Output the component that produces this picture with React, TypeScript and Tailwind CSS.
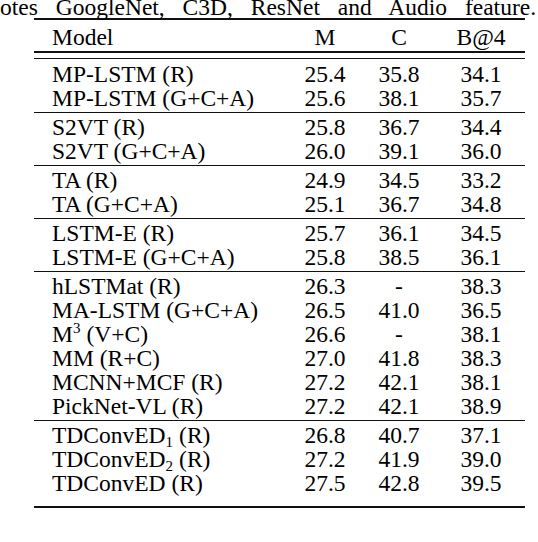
import React from "react";

type Row = { name: React.ReactNode; m: string; c: string; b: string };

const groups: Row[][] = [
  [
    { name: "MP-LSTM (R)", m: "25.4", c: "35.8", b: "34.1" },
    { name: "MP-LSTM (G+C+A)", m: "25.6", c: "38.1", b: "35.7" },
  ],
  [
    { name: "S2VT (R)", m: "25.8", c: "36.7", b: "34.4" },
    { name: "S2VT (G+C+A)", m: "26.0", c: "39.1", b: "36.0" },
  ],
  [
    { name: "TA (R)", m: "24.9", c: "34.5", b: "33.2" },
    { name: "TA (G+C+A)", m: "25.1", c: "36.7", b: "34.8" },
  ],
  [
    { name: "LSTM-E (R)", m: "25.7", c: "36.1", b: "34.5" },
    { name: "LSTM-E (G+C+A)", m: "25.8", c: "38.5", b: "36.1" },
  ],
  [
    { name: "hLSTMat (R)", m: "26.3", c: "-", b: "38.3" },
    { name: "MA-LSTM (G+C+A)", m: "26.5", c: "41.0", b: "36.5" },
    {
      name: (
        <>
          M<sup className="text-[15px] -top-[9px]">3</sup>
          <span className="ml-[6px]">(V+C)</span>
        </>
      ),
      m: "26.6",
      c: "-",
      b: "38.1",
    },
    { name: "MM (R+C)", m: "27.0", c: "41.8", b: "38.3" },
    { name: "MCNN+MCF (R)", m: "27.2", c: "42.1", b: "38.1" },
    { name: "PickNet-VL (R)", m: "27.2", c: "42.1", b: "38.9" },
  ],
  [
    {
      name: (
        <>
          TDConvED<sub className="text-[15px]">1</sub>
          <span className="ml-[6px]">(R)</span>
        </>
      ),
      m: "26.8",
      c: "40.7",
      b: "37.1",
    },
    {
      name: (
        <>
          TDConvED<sub className="text-[15px]">2</sub>
          <span className="ml-[6px]">(R)</span>
        </>
      ),
      m: "27.2",
      c: "41.9",
      b: "39.0",
    },
    { name: "TDConvED (R)", m: "27.5", c: "42.8", b: "39.5" },
  ],
];

function TRow({ r }: { r: Row }) {
  return (
    <div className="grid grid-cols-[250px_82px_66px_1fr] h-[24px] items-center leading-[24px]">
      <div className="pl-[18px] whitespace-nowrap">{r.name}</div>
      <div className="text-center">{r.m}</div>
      <div className="text-center">{r.c}</div>
      <div className="text-center pl-[5px]">{r.b}</div>
    </div>
  );
}

export default function App() {
  return (
    <div
      className="w-[538px] h-[542px] bg-white text-black overflow-hidden text-[23.5px]"
      style={{ fontFamily: '"Liberation Serif", "Times New Roman", serif' }}
    >
      <div className="h-[20px] leading-[20px] whitespace-nowrap -mt-[3px] [word-spacing:12px]">
        otes GoogleNet, C3D, ResNet and Audio feature.
      </div>
      <div className="ml-[34px] w-[491px] mt-[1px]">
        <div className="h-[2px] bg-[#111]" />
        <div className="pt-[5px]">
          <TRow r={{ name: "Model", m: "M", c: "C", b: "B@4" }} />
        </div>
        <div className="h-[2px] bg-[#111] mt-[2px]" />
        <div className="h-[1px] bg-[#111] mt-[5px]" />
        <div className="pt-[3px]">
          {groups.map((g, gi) => (
            <div key={gi}>
              {gi > 0 && <div className="h-[1px] bg-[#111] mt-[2px] mb-[2px]" />}
              {g.map((r, ri) => (
                <TRow key={ri} r={r} />
              ))}
            </div>
          ))}
        </div>
        <div className="h-[2px] bg-[#111] mt-[11px]" />
      </div>
    </div>
  );
}
